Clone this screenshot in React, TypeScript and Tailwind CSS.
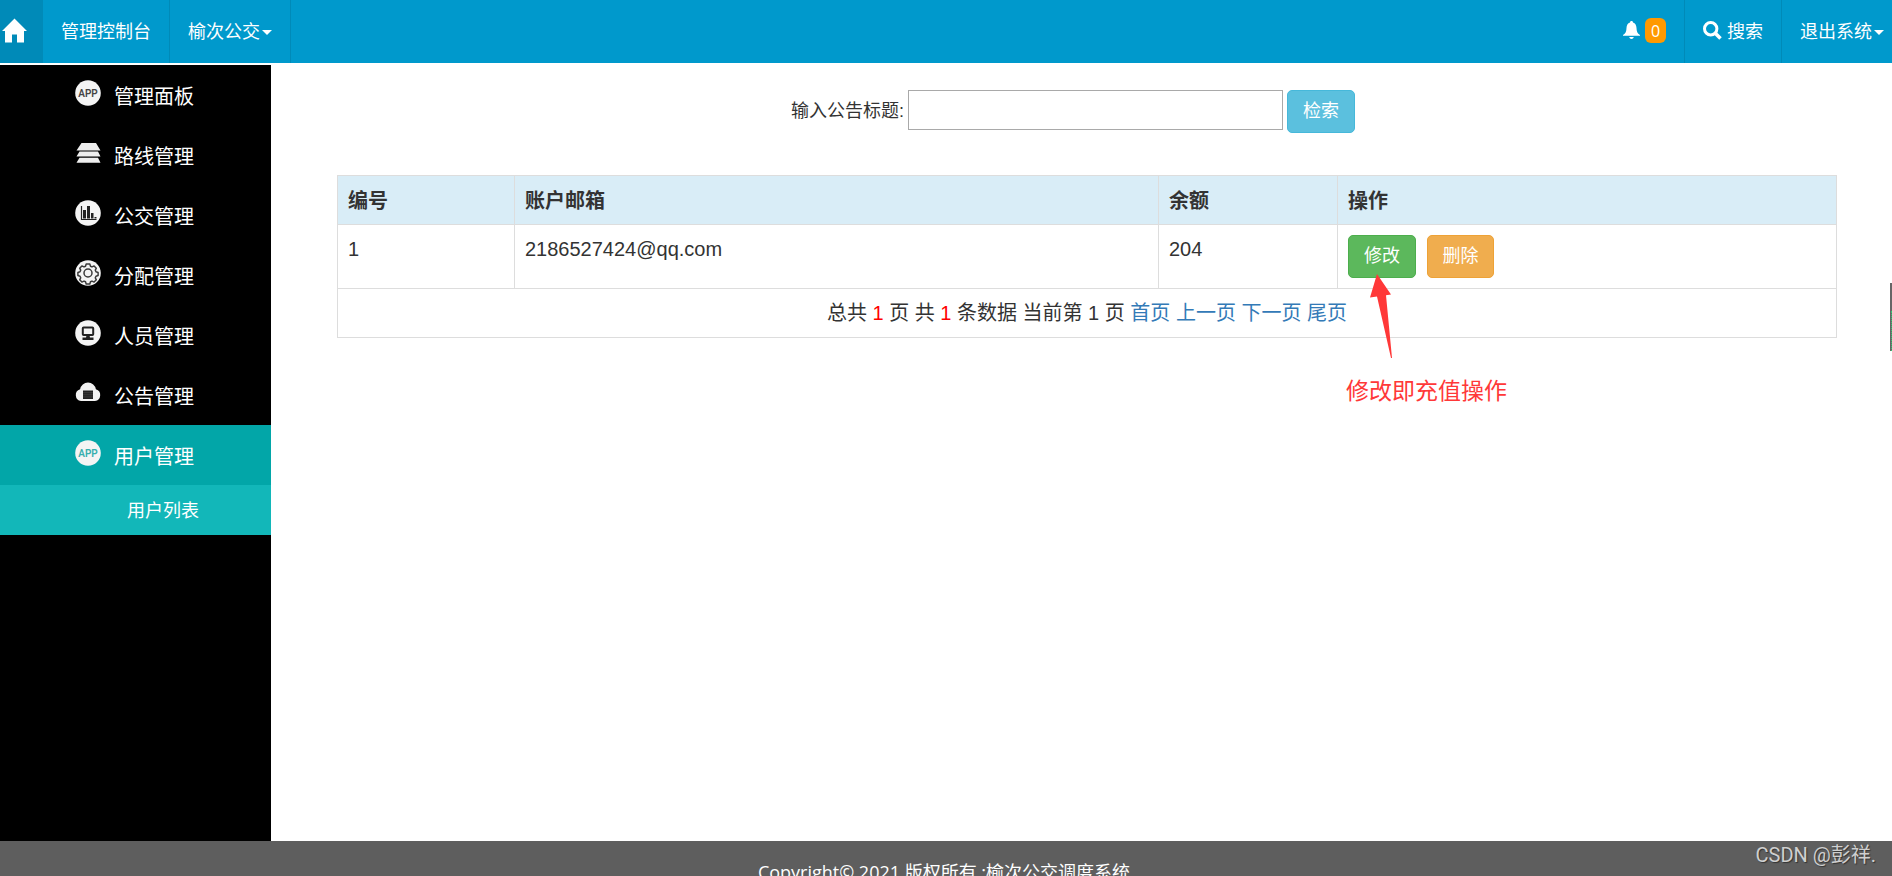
import type { ReactNode } from 'react';

const Caret = () => (
  <span className="ml-[2px] mt-1 h-0 w-0 border-x-5 border-t-5 border-x-transparent border-t-white" />
);

const HomeIcon = () => (
  <svg width="25" height="25" viewBox="0 0 25 25" fill="#fff" aria-hidden="true">
    <path d="M12.500 0.500 25 13h-3v11.500h-7v-8h-5v8H3V13H0z" />
  </svg>
);

const BellIcon = () => (
  <svg width="17" height="19" viewBox="0 0 17 19" fill="#fff" aria-hidden="true">
    <path d="M8.500 0c1 0 1.500.7 1.500 1.500 2.400.8 3.400 3 3.500 5.500.1 3.500.8 5.500 3.500 7v.8H0V14c2.700-1.500 3.400-3.500 3.500-7C3.600 4.500 4.600 2.300 7 1.500 7 .7 7.500 0 8.500 0zM6.200 16h4.600c-.3 1.300-1.200 2-2.300 2s-2-.7-2.300-2z" />
  </svg>
);

const SearchIcon = () => (
  <svg width="19" height="19" viewBox="0 0 19 19" fill="none" stroke="#fff" aria-hidden="true">
    <circle cx="7.700" cy="7.700" r="6.200" strokeWidth="3" />
    <path d="m12.300 12.300 5.200 5.200" strokeWidth="3.600" />
  </svg>
);

const Round = ({ children }: { children: ReactNode }) => (
  <svg width="26" height="26" viewBox="0 0 26 26" aria-hidden="true">
    <circle cx="13" cy="13" r="12.800" fill="#f4f4f4" />
    {children}
  </svg>
);

const AppIcon = ({ active = false }: { active?: boolean }) => (
  <Round>
    <text
      x="13"
      y="17"
      textAnchor="middle"
      fontSize="10"
      fontWeight="600"
      fontFamily="Roboto, sans-serif"
      fill={active ? '#37aeae' : '#444'}
    >
      APP
    </text>
  </Round>
);

const LayersIcon = () => (
  <svg width="26" height="26" viewBox="0 0 26 26" fill="#eee" aria-hidden="true">
    <path d="M6.500 3h14.500l4.500 7.500H1.500zM4.500 11.500h18.500l2.500 5H1.500zM4.500 17.800h18.500l2.500 5H1.500z" />
  </svg>
);

const ChartIcon = () => (
  <Round>
    <path d="M6.500 6v13.500h15" fill="none" stroke="#222" strokeWidth="1.200" />
    <path d="M8 10h3v8.500H8zM12 6h3v12.500h-3zM16 13h2.500v5.500H16zM19.500 17h2v1.500h-2z" fill="#222" />
  </Round>
);

const GearIcon = () => (
  <Round>
    <g fill="none" stroke="#3a3a3a">
      <circle cx="13" cy="13" r="4" strokeWidth="1.500" />
      <path
        d="M11.200 4h3.600l.7 2.200 1.500.7 2.100-1 2.200 2.300-1 2 .7 1.600 2.100.7v3l-2.100.7-.7 1.600 1 2-2.200 2.300-2.100-1-1.500.7-.7 2.200h-3.600l-.7-2.200-1.500-.7-2.100 1-2.200-2.300 1-2-.7-1.600-2.100-.7v-3l2.100-.7.700-1.600-1-2 2.200-2.300 2.100 1 1.500-.7z"
        strokeWidth="1.500"
        strokeLinejoin="round"
      />
    </g>
  </Round>
);

const MonitorIcon = () => (
  <Round>
    <rect x="7.800" y="7.500" width="10.400" height="7.500" rx="0.800" fill="none" stroke="#222" strokeWidth="2" />
    <path d="M11.500 15.500h3l.5 2h3.500V20h-11v-2.500H11z" fill="#222" />
  </Round>
);

const CloudIcon = () => (
  <svg width="26" height="26" viewBox="0 0 26 26" aria-hidden="true">
    <path d="M6 21a6 6 0 0 1-.9-11.700A8 8 0 0 1 20.900 9.300 6 6 0 0 1 20 21z" fill="#f2f2f2" />
    <path d="M8 10.500h10V19H8z" fill="#222" />
    <path d="M8 12.700h10M8 14.800h10M8 16.900h10" stroke="#555" strokeWidth="0.500" />
  </svg>
);

const menu = [
  { label: '管理面板', icon: <AppIcon /> },
  { label: '路线管理', icon: <LayersIcon /> },
  { label: '公交管理', icon: <ChartIcon /> },
  { label: '分配管理', icon: <GearIcon /> },
  { label: '人员管理', icon: <MonitorIcon /> },
  { label: '公告管理', icon: <CloudIcon /> },
  { label: '用户管理', icon: <AppIcon active />, active: true, children: ['用户列表'] },
];

const Header = () => (
  <header className="flex h-[63px] shrink-0 justify-between bg-[#0099cc] text-lg text-white [&_a]:pb-[2px]">
    <nav className="flex">
      <a href="#" aria-label="首页" className="flex w-[43px] items-center bg-[#008ab8] pl-[2px]">
        <HomeIcon />
      </a>
      <a href="#" className="flex items-center border-r border-[#008ab8] px-[18px]">
        管理控制台
      </a>
      <a href="#" className="flex items-center border-r border-[#008ab8] px-[18px]">
        榆次公交
        <Caret />
      </a>
    </nav>
    <div className="flex">
      <a href="#" aria-label="消息" className="flex items-center gap-[5px] px-[18px]">
        <BellIcon />
        <span className="flex h-[25px] w-[21px] items-center justify-center rounded-md bg-[#ff9900] text-base">
          0
        </span>
      </a>
      <a href="#" className="flex items-center gap-[5px] border-l border-[#008ab8] px-[18px]">
        <SearchIcon />
        搜索
      </a>
      <a href="#" className="flex items-center border-l border-[#008ab8] pl-[18px] pr-2">
        退出系统
        <Caret />
      </a>
    </div>
  </header>
);

const Sidebar = () => (
  <aside className="w-[271px] shrink-0 bg-black text-white">
    <ul>
      {menu.map((item) => (
        <li key={item.label}>
          <a
            href="#"
            className={`flex h-[60px] items-center gap-[13px] pl-[75px] text-xl ${item.active ? 'bg-[#02a6a8]' : ''}`}
          >
            <span className="pb-1">{item.icon}</span>
            <span className="pt-[3px]">{item.label}</span>
          </a>
          {item.children?.map((child) => (
            <a key={child} href="#" className="flex h-[50px] items-center bg-[#12b7b9] pl-[127px] text-lg">
              {child}
            </a>
          ))}
        </li>
      ))}
    </ul>
  </aside>
);

const SearchForm = () => (
  <form className="mr-7 flex justify-center text-lg" onSubmit={(e) => e.preventDefault()}>
    <label htmlFor="title" className="mr-1 flex h-10 items-center pt-px">
      输入公告标题:
    </label>
    <input id="title" type="text" className="h-10 w-[375px] border border-[#a9a9a9] px-2" />
    <button
      type="submit"
      className="ml-1 h-[43px] w-[68px] rounded-[5px] border border-[#46b8da] bg-[#5bc0de] pb-[2px] text-white"
    >
      检索
    </button>
  </form>
);

const UserTable = () => (
  <table className="mt-[42px] w-full table-fixed border-collapse text-left text-xl leading-7 [&_td]:border [&_td]:border-[#ddd] [&_td]:p-[10px] [&_td]:align-top [&_th]:border [&_th]:border-[#ddd] [&_th]:px-[10px] [&_th]:pt-[11px] [&_th]:pb-[9px]">
    <thead className="bg-[#d9edf7]">
      <tr>
        <th className="w-[177px]">编号</th>
        <th>账户邮箱</th>
        <th className="w-[179px]">余额</th>
        <th className="w-[499px]">操作</th>
      </tr>
    </thead>
    <tbody>
      <tr>
        <td>1</td>
        <td>2186527424@qq.com</td>
        <td>204</td>
        <td>
          <div className="relative flex gap-[11px] text-lg text-white">
            <button type="button" className="h-[43px] w-[68px] rounded-[5px] border border-[#4cae4c] bg-[#5cb85c] pb-[2px]">
              修改
            </button>
            <button type="button" className="h-[43px] w-[67px] rounded-[5px] border border-[#eea236] bg-[#f0ad4e] pb-[2px]">
              删除
            </button>
            {/* hint pointing at the edit button */}
            <div className="pointer-events-none absolute left-0 top-[39px] text-[23px] leading-8 text-[#ff3838]">
              <svg width="60" height="84" viewBox="0 0 60 84" fill="#ff3838" aria-hidden="true">
                <path d="M29 0 43 20.500l-5 .8 6 62.700h-1L29 22.500l-7 1z" />
              </svg>
              <p className="mt-[17px] -ml-[2px] whitespace-nowrap">修改即充值操作</p>
            </div>
          </div>
        </td>
      </tr>
      <tr>
        <td colSpan={4} className="text-center">
          总共 <span className="text-[#ff0000]">1</span> 页 共 <span className="text-[#ff0000]">1</span> 条数据 当前第 1
          页{' '}
          <a href="#" className="text-[#337ab7]">首页</a>{' '}
          <a href="#" className="text-[#337ab7]">上一页</a>{' '}
          <a href="#" className="text-[#337ab7]">下一页</a>{' '}
          <a href="#" className="text-[#337ab7]">尾页</a>
        </td>
      </tr>
    </tbody>
  </table>
);

const App = () => {
  return (
    <div className="relative flex h-screen flex-col overflow-hidden bg-white font-['Open_Sans','Noto_Sans_CJK_SC',sans-serif] text-[#333]">
      <Header />
      <div className="mt-[2px] flex min-h-0 flex-1">
        <Sidebar />
        <main className="flex-1 pl-[66px] pr-[55px] pt-[25px] font-['Liberation_Sans','Noto_Sans_CJK_SC',sans-serif]">
          <SearchForm />
          <UserTable />
        </main>
      </div>
      <footer className="h-[35px] shrink-0 overflow-hidden bg-[#5e5e5e] pr-1 pt-[17px] text-center text-lg leading-7 text-white">
        Copyright© 2021 版权所有 :榆次公交调度系统
      </footer>

      {/* edge handle */}
      <div className="absolute right-0 top-[283px] flex h-[68px] w-[2px] flex-col justify-end bg-[#666] shadow-md">
        <div className="ml-px h-10 border-l border-dotted border-[#2ecc71]" />
      </div>
      <p className="absolute bottom-[7px] right-4 font-[Roboto,'Noto_Sans_CJK_SC',sans-serif] text-xl leading-7 text-[#cfcfcf] [text-shadow:1px_1px_1px_#333]">
        CSDN @彭祥.
      </p>
    </div>
  );
};

export default App;
